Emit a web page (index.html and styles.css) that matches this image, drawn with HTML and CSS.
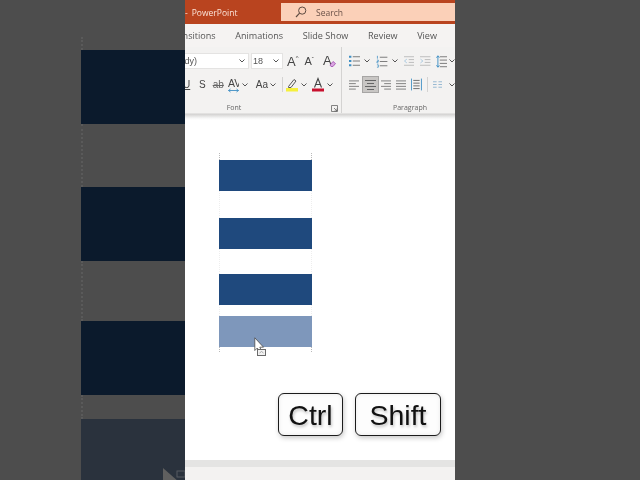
FILE: index.html
```html
<!DOCTYPE html>
<html lang="en">
<head>
<meta charset="utf-8">
<title>PowerPoint</title>
<link rel="stylesheet" href="styles.css">
</head>
<body>
<div class="frame">
  <aside class="side side-left">
    <div class="bg-stack">
      <div class="bg-guide g1"></div>
      <div class="bg-band b1"></div>
      <div class="bg-guide g2"></div>
      <div class="bg-band b2"></div>
      <div class="bg-guide g3"></div>
      <div class="bg-band b3"></div>
      <div class="bg-guide g4"></div>
      <div class="bg-band b4"></div>
    </div>
    <svg class="bg-cursor" width="24" height="14" viewBox="0 0 24 14"><path d="M0 0L0 14L16 14Z" fill="#5f5f5f"/><rect x="14" y="3" width="8" height="6" fill="none" stroke="#565a62"/></svg>
  </aside>

  <main class="app">
    <header class="titlebar">
      <div class="brand"><span class="dash">-</span><span>PowerPoint</span></div>
      <div class="search">
        <svg width="12" height="12" viewBox="0 0 12 12"><circle cx="7.2" cy="4.6" r="3.6" fill="none" stroke="#5c4a40"/><path d="M4.6 7.2L1 11" stroke="#5c4a40" stroke-width="1.1"/></svg>
        <span>Search</span>
      </div>
    </header>
    <nav class="tabs">
      <span>Transitions</span><span>Animations</span><span>Slide Show</span><span>Review</span><span>View</span>
    </nav>
    <section class="ribbon">
      <div class="group font-group">
        <div class="row row-top">
          <div class="combo combo-font"><span>(Body)</span><svg class="chev" width="6" height="4" viewBox="0 0 6 4"><path d="M.5.5L3 3L5.5.5" fill="none" stroke="#555"/></svg></div>
          <div class="combo combo-size"><span>18</span><svg class="chev" width="6" height="4" viewBox="0 0 6 4"><path d="M.5.5L3 3L5.5.5" fill="none" stroke="#555"/></svg></div>
          <div class="glyph big ml4">A<sup>^</sup></div>
          <div class="glyph mid ml6">A<sup>ˇ</sup></div>
          <svg class="ml9" width="13" height="14" viewBox="0 0 13 14"><text x="0" y="11" font-family="Liberation Sans" font-size="13" fill="#444">A</text><path d="M7 11L10 7.500L12.500 9.500L10 12.500H8Z" fill="#d9a6e0" stroke="#a24bb3" stroke-width=".8"/></svg>
        </div>
        <div class="row row-bottom">
          <span class="glyph under">U</span>
          <span class="glyph sym ml11">S</span>
          <span class="glyph strike ml7">ab</span>
          <svg class="ml4" width="11" height="16" viewBox="0 0 11 16"><text x="0" y="10" font-family="Liberation Sans" font-size="10.500" fill="#444">AV</text><path d="M.5 13.500H10.500M.5 13.500L2.500 12M.5 13.500L2.500 15M10.500 13.500L8.500 12M10.500 13.500L8.500 15" stroke="#3f8fc4" fill="none" stroke-width=".9"/></svg>
          <svg class="chev ml3" width="6" height="4" viewBox="0 0 6 4"><path d="M.5.5L3 3L5.500.5" fill="none" stroke="#555"/></svg>
          <span class="glyph case ml8">Aa</span>
          <svg class="chev ml2" width="6" height="4" viewBox="0 0 6 4"><path d="M.5.5L3 3L5.500.5" fill="none" stroke="#555"/></svg>
          <span class="vsep ml6"></span>
          <svg class="ml3" width="12" height="15" viewBox="0 0 12 15"><path d="M2.500 9.500L8 2.500L10 4L5 10.500H2.500Z" fill="#f3f2f1" stroke="#555"/><rect y="11" width="12" height="3.500" fill="#f5f03c"/></svg>
          <svg class="chev ml3" width="6" height="4" viewBox="0 0 6 4"><path d="M.5.5L3 3L5.500.5" fill="none" stroke="#555"/></svg>
          <svg class="ml5" width="12" height="15" viewBox="0 0 12 15"><path d="M2.500 10.500L6 1.500L9.500 10.500M3.800 7.500H8.200" fill="none" stroke="#444" stroke-width="1.100"/><rect y="11.500" width="12" height="3" fill="#c8102e"/></svg>
          <svg class="chev ml3" width="6" height="4" viewBox="0 0 6 4"><path d="M.5.5L3 3L5.500.5" fill="none" stroke="#555"/></svg>
        </div>
        <div class="group-label">
          <span>Font</span>
          <svg class="launcher" width="7" height="7" viewBox="0 0 7 7"><path d="M.5 6.500V.5H6.500V6.500H.5M3 3L6 6M6 3.500V6H3.500" fill="none" stroke="#666" stroke-width=".8"/></svg>
        </div>
      </div>

      <div class="group para-group">
        <div class="row row-top">
          <svg width="12" height="12" viewBox="0 0 12 12"><path d="M4 1.500H12M4 6H12M4 10.500H12" stroke="#777"/><path d="M0 .5h2.500v2H0zM0 5h2.500v2H0zM0 9.500h2.500v2H0z" fill="#3f8fc4"/></svg>
          <svg class="chev ml4" width="6" height="4" viewBox="0 0 6 4"><path d="M.5.5L3 3L5.500.5" fill="none" stroke="#555"/></svg>
          <svg class="ml6" width="12" height="13" viewBox="0 0 12 13"><path d="M4 2H12M4 6.500H12M4 11H12" stroke="#777"/><path d="M1.500 .5V3.500M1 5H2.500V6.500H1V8H2.500M1 10H2.500V12.500H1" stroke="#3f8fc4" fill="none" stroke-width=".8"/></svg>
          <svg class="chev ml4" width="6" height="4" viewBox="0 0 6 4"><path d="M.5.5L3 3L5.500.5" fill="none" stroke="#555"/></svg>
          <svg class="ml6" width="11" height="10" viewBox="0 0 11 10"><path d="M0 .5H11M5 3.500H11M5 6.500H11M0 9.500H11" stroke="#bbb"/><path d="M3 3L.5 5L3 7" fill="none" stroke="#a9c9df"/></svg>
          <svg class="ml6" width="11" height="10" viewBox="0 0 11 10"><path d="M0 .5H11M5 3.500H11M5 6.500H11M0 9.500H11" stroke="#bbb"/><path d="M.5 3L3 5L.5 7" fill="none" stroke="#a9c9df"/></svg>
          <svg class="ml5" width="12" height="13" viewBox="0 0 12 13"><path d="M4 1.500H12M4 5H12M4 8.500H12M4 12H12" stroke="#777"/><path d="M2 .5V12.500M.5 2.500L2 .5L3.500 2.500M.5 10.500L2 12.500L3.500 10.500" fill="none" stroke="#3f8fc4"/></svg>
          <svg class="chev ml2" width="6" height="4" viewBox="0 0 6 4"><path d="M.5.5L3 3L5.500.5" fill="none" stroke="#555"/></svg>
        </div>
        <div class="row row-bottom">
          <svg width="11" height="10" viewBox="0 0 11 10"><path d="M0 .5H11M0 3.500H7.500M0 6.500H11M0 9.500H7.500" stroke="#777"/></svg>
          <div class="selected ml3"><svg width="11" height="10" viewBox="0 0 11 10"><path d="M0 .5H11M2 3.500H9M0 6.500H11M2 9.500H9" stroke="#666"/></svg></div>
          <svg class="ml2" width="11" height="10" viewBox="0 0 11 10"><path d="M0 .5H11M3.500 3.500H11M0 6.500H11M3.500 9.500H11" stroke="#777"/></svg>
          <svg class="ml5" width="11" height="10" viewBox="0 0 11 10"><path d="M0 .5H11M0 3.500H11M0 6.500H11M0 9.500H11" stroke="#777"/></svg>
          <svg class="ml5" width="12" height="13" viewBox="0 0 12 13"><path d="M.5 0V13M11.500 0V13" stroke="#3f8fc4"/><path d="M2.500 2H9.500M2.500 5H9.500M2.500 8H9.500M2.500 11H9.500" stroke="#666"/></svg>
          <span class="vsep ml5"></span>
          <svg class="ml5" width="10" height="7" viewBox="0 0 10 7"><path d="M0 .5H4M6 .5H10M0 3.500H4M6 3.500H10M0 6.500H4M6 6.500H10" stroke="#8fb4cf"/></svg>
          <svg class="chev ml7" width="6" height="4" viewBox="0 0 6 4"><path d="M.5.5L3 3L5.500.5" fill="none" stroke="#555"/></svg>
        </div>
        <div class="group-label"><span>Paragraph</span></div>
      </div>
    </section>
    <div class="ribbon-shadow"></div>

    <section class="canvas">
      <div class="shapes">
        <div class="guide g-top"></div>
        <div class="stripe"></div>
        <div class="gap-a"></div>
        <div class="stripe"></div>
        <div class="gap-b"></div>
        <div class="stripe"></div>
        <div class="gap-c"></div>
        <div class="stripe ghost"></div>
        <div class="guide g-bottom"></div>
      </div>
      <svg class="cursor" width="13" height="20" viewBox="0 0 13 20"><path d="M.8.800V13.500L3.300 11L5.200 14.500L7.400 13.400L5.800 10.200H9.500Z" fill="#fff" stroke="#4a4a4a" stroke-width=".8"/><rect x="3.500" y="12.500" width="8" height="6" fill="#f2f2f2" stroke="#6a6a6a"/><path d="M5.500 16L7.500 14.500L9.500 16" fill="none" stroke="#888" stroke-width=".7"/></svg>
      <div class="keys">
        <kbd class="key key-ctrl">Ctrl</kbd>
        <kbd class="key key-shift">Shift</kbd>
      </div>
    </section>
    <footer class="footer-bar"></footer>
    <div class="status"></div>
  </main>

  <aside class="side side-right"></aside>
</div>
</body>
</html>
```

FILE: styles.css
```css
* { box-sizing: border-box; }
html, body { margin: 0; height: 100%; overflow: hidden; background: #4d4d4d; }
body { font-family: "Open Sans", "Liberation Sans", sans-serif; }

.frame { display: flex; width: 640px; height: 480px; }

/* dimmed side panels */
.side { width: 185px; height: 480px; background: #4d4d4d; flex: none; overflow: hidden; position: relative; }
.bg-stack { margin-left: 81px; height: 480px; display: flex; flex-direction: column; }
.bg-guide { width: 2px; border-left: 2px dotted #5a5a5a; flex: none; }
.g1 { height: 13px; margin-top: 37px; }
.g2 { height: 63px; }
.g3 { height: 60px; }
.g4 { height: 24px; }
.bg-band { background: #0b1a2c; flex: none; }
.b1 { height: 74px; }
.b2 { height: 74px; }
.b3 { height: 74px; }
.b4 { flex: 1; background: #2a323d; }
.bg-cursor { position: absolute; left: 163px; top: 468px; }

/* centre PowerPoint window */
.app { width: 270px; height: 480px; flex: none; display: flex; flex-direction: column; overflow: hidden; background: #fff; position: relative; filter: blur(.35px); }

.titlebar { height: 24px; background: #b9441f; display: flex; align-items: center; color: #fbe3d8; font-size: 8.500px; flex: none; }
.brand { width: 96px; display: flex; gap: 4px; }
.dash { margin-left: 0; }
.search { flex: 1; height: 18px; background: #fbd0b8; display: flex; align-items: center; gap: 9px; padding-left: 14px; color: #6a5148; font-size: 8.500px; }

.tabs { height: 23px; flex: none; background: #f5f3f2; display: flex; justify-content: flex-end; align-items: center; gap: 19.500px; padding-right: 18px; font-size: 9.100px; color: #555; white-space: nowrap; }

.ribbon { height: 67px; flex: none; background: #f3f2f1; display: flex; border-bottom: 1px solid #e2e1e0; font-family: "Liberation Sans", sans-serif; color: #444; }
.group { display: flex; flex-direction: column; }
.font-group { width: 157px; flex: none; border-right: 1px solid #d4d3d2; }
.para-group { flex: 1; min-width: 0; padding-left: 7px; overflow: hidden; }

.row { display: flex; align-items: center; flex: none; white-space: nowrap; }
.row-top { height: 24px; padding-top: 4px; }
.row-bottom { height: 25px; padding-top: 2px; }
.font-group .row { margin-left: -2px; }

.combo { height: 16px; background: #fff; display: flex; align-items: center; justify-content: space-between; font-size: 9px; color: #555; border: 1px solid #e4e3e2; flex: none; }
.combo-font { width: 66px; margin-right: 2px; padding: 0 3px 0 0; justify-content: flex-end; gap: 42px; }
.combo-size { width: 32px; padding: 0 3px 0 1px; }

.glyph { flex: none; color: #444; line-height: 1; }
.glyph sup { font-size: 6px; vertical-align: top; line-height: 1; }
.big { font-size: 13px; }
.mid { font-size: 11px; }
.under { font-size: 10px; text-decoration: underline; width: 5px; }
.sym { font-size: 10px; }
.strike { font-size: 10px; text-decoration: line-through; color: #666; }
.case { font-size: 10px; }
.vsep { width: 1px; height: 15px; background: #d4d3d2; flex: none; }
.selected { width: 17px; height: 17px; background: #c8c6c4; border: 1px solid #a6a5a4; display: flex; align-items: center; justify-content: center; flex: none; }

.group-label { flex: 1; display: flex; align-items: center; justify-content: center; padding-top: 6px; font-size: 7px; color: #666; position: relative; font-family: "Open Sans", sans-serif; }
.font-group .group-label { padding-right: 58px; }
.para-group .group-label { padding-left: 16px; }
.launcher { position: absolute; right: 3px; top: 9px; }

.ml1 { margin-left: 1px; } .ml2 { margin-left: 2px; } .ml3 { margin-left: 3px; }
.ml4 { margin-left: 4px; } .ml5 { margin-left: 5px; } .ml6 { margin-left: 6px; }
.ml7 { margin-left: 7px; } .ml8 { margin-left: 8px; } .ml9 { margin-left: 9px; } .ml11 { margin-left: 11px; }
.chev { flex: none; }

.ribbon-shadow { height: 6px; flex: none; background: linear-gradient(#d2d1d0, #f7f7f7 70%, #fff); }

.canvas { flex: 1; background: #fff; position: relative; padding-left: 34px; }
.shapes { width: 93px; padding-top: 33px; display: flex; flex-direction: column; }
.guide { border-left: 1px dotted #b9b9b9; border-right: 1px dotted #b9b9b9; }
.g-top { height: 7px; }
.g-bottom { height: 5px; }
.stripe { height: 31px; background: #1f497d; flex: none; }
.ghost { background: #7e97bb; }
.gap-a { height: 27px; border-left: 1px dotted #eee; border-right: 1px dotted #eee; }
.gap-b { height: 25px; border-left: 1px dotted #eee; border-right: 1px dotted #eee; }
.gap-c { height: 11px; border-left: 1px dotted #eee; border-right: 1px dotted #eee; }
.cursor { position: absolute; left: 69px; top: 217px; }

.keys { position: absolute; left: 93px; top: 273px; display: flex; gap: 12px; }
.key { height: 43px; padding-top: 2px; display: flex; align-items: center; justify-content: center; background: #fdfdfd; border: 1.500px solid #1c1c1c; border-radius: 6px; box-shadow: 1px 2px 5px rgba(0,0,0,.22), inset 0 0 4px rgba(0,0,0,.08); font-family: "Liberation Sans", Arial, sans-serif; font-size: 28.500px; color: #111; text-shadow: 1px 2px 3px rgba(0,0,0,.25); }
.key-ctrl { width: 65px; }
.key-shift { width: 86px; }

.footer-bar { height: 7px; flex: none; background: #e4e4e3; }
.status { height: 13px; flex: none; background: #f3f2f1; }
```
